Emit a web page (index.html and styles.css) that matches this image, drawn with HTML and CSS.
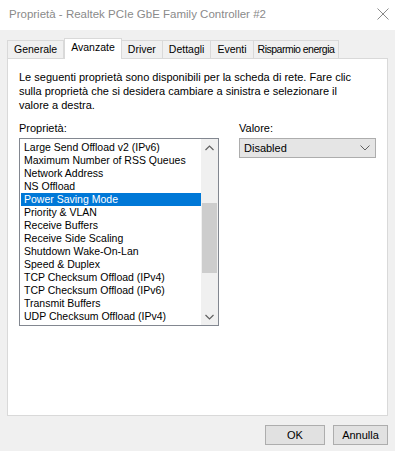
FILE: index.html
```html
<!DOCTYPE html>
<html lang="it">
<head>
  <meta charset="UTF-8">
  <title>Proprietà - Realtek PCIe GbE Family Controller #2</title>
  <link rel="stylesheet" href="styles.css">
</head>
<body>

<div class="window">
  <div class="titlebar">
    <span class="title">Proprietà - Realtek PCIe GbE Family Controller #2</span>
    <svg class="close" width="12" height="12" viewBox="0 0 12 12">
      <path d="M0.5 0.5 L11.5 11.5 M11.5 0.5 L0.5 11.5" stroke="#8a8a8a" stroke-width="1" fill="none"/>
    </svg>
  </div>

  <div class="content">
    <div class="tabs">
      <div class="tab">Generale</div>
      <div class="tab active">Avanzate</div>
      <div class="tab">Driver</div>
      <div class="tab">Dettagli</div>
      <div class="tab">Eventi</div>
      <div class="tab tab-long">Risparmio energia</div>
    </div>

    <div class="panel">
      <p class="desc">Le seguenti proprietà sono disponibili per la scheda di rete. Fare clic sulla proprietà che si desidera cambiare a sinistra e selezionare il valore a destra.</p>

      <div class="fields">
        <div class="col-left">
          <div class="label">Proprietà:</div>
          <div class="listbox">
            <ul class="items">
              <li>Large Send Offload v2 (IPv6)</li>
              <li>Maximum Number of RSS Queues</li>
              <li>Network Address</li>
              <li>NS Offload</li>
              <li class="selected">Power Saving Mode</li>
              <li>Priority &amp; VLAN</li>
              <li>Receive Buffers</li>
              <li>Receive Side Scaling</li>
              <li>Shutdown Wake-On-Lan</li>
              <li>Speed &amp; Duplex</li>
              <li>TCP Checksum Offload (IPv4)</li>
              <li>TCP Checksum Offload (IPv6)</li>
              <li>Transmit Buffers</li>
              <li>UDP Checksum Offload (IPv4)</li>
            </ul>
            <div class="scrollbar">
              <div class="arrow">
                <svg width="9" height="6" viewBox="0 0 9 6"><polyline points="0.5,5 4.5,1 8.5,5" stroke="#606060" stroke-width="1.2" fill="none"/></svg>
              </div>
              <div class="track">
                <div class="thumb"></div>
              </div>
              <div class="arrow">
                <svg width="9" height="6" viewBox="0 0 9 6"><polyline points="0.5,1 4.5,5 8.5,1" stroke="#606060" stroke-width="1.2" fill="none"/></svg>
              </div>
            </div>
          </div>
        </div>

        <div class="col-right">
          <div class="label">Valore:</div>
          <div class="select">
            <span>Disabled</span>
            <svg width="10" height="6" viewBox="0 0 10 6"><polyline points="0.5,0.5 5,5 9.5,0.5" stroke="#606060" stroke-width="1" fill="none"/></svg>
          </div>
        </div>
      </div>
    </div>

    <div class="buttons">
      <button class="btn ok">OK</button>
      <button class="btn">Annulla</button>
    </div>
  </div>
</div>

</body>
</html>
```

FILE: styles.css
```css
* {
  box-sizing: border-box;
}

body {
  margin: 0;
  background: #f0f0f0;
  font-family: "Liberation Sans", Arial, sans-serif;
  font-size: 10.5px;
  color: #000;
}

.window {
  width: 395px;
  height: 451px;
  overflow: hidden;
}

.titlebar {
  height: 30px;
  background: #fff;
  display: flex;
  align-items: center;
  justify-content: space-between;
  padding: 0 6px 2px 9px;
}

.title {
  color: #8a8a8a;
  font-size: 11.5px;
}

.content {
  padding: 7px 7px 0 7px;
}

.tabs {
  display: flex;
  align-items: flex-end;
  height: 21px;
  font-size: 10.5px;
}

.tab {
  height: 18px;
  line-height: 16px;
  padding: 0 6px;
  border: 1px solid #d9d9d9;
  border-bottom: none;
  border-left: none;
  background: #f0f0f0;
}

.tab:first-child {
  border-left: 1px solid #d9d9d9;
}

.tab-long {
  padding: 0 4px;
  letter-spacing: -0.5px;
}

.tab.active {
  height: 21px;
  line-height: 17px;
  background: #fff;
  border-left: 1px solid #d9d9d9;
  margin-bottom: -1px;
  position: relative;
  z-index: 1;
}

.panel {
  background: #fff;
  border: 1px solid #d9d9d9;
  height: 358px;
  padding: 11px 11px 0 11px;
}

.desc {
  margin: 0;
  width: 342px;
  font-size: 11px;
  line-height: 14px;
}

.fields {
  display: flex;
  gap: 20px;
  margin-top: 9px;
}

.col-left {
  width: 200px;
}

.col-right {
  flex: 1;
}

.label {
  font-size: 11px;
  line-height: 14px;
  margin-bottom: 3px;
}

.listbox {
  height: 188px;
  border: 1px solid #828790;
  display: flex;
  background: #fff;
}

.items {
  list-style: none;
  margin: 0;
  padding: 2px 0 0 1px;
  flex: 1;
}

.items li {
  height: 13px;
  line-height: 13px;
  padding-left: 3px;
  white-space: nowrap;
}

.items li.selected {
  background: #0078d7;
  color: #fff;
}

.scrollbar {
  width: 17px;
  background: #f0f0f0;
  display: flex;
  flex-direction: column;
}

.arrow {
  height: 17px;
  display: flex;
  align-items: center;
  justify-content: center;
}

.track {
  flex: 1;
  padding-top: 47px;
}

.thumb {
  height: 70px;
  margin: 0 1px;
  background: #cdcdcd;
}

.select {
  height: 20px;
  border: 1px solid #adadad;
  background: #e5e5e5;
  font-size: 11px;
  display: flex;
  align-items: center;
  justify-content: space-between;
  padding: 0 5px 0 4px;
}

.buttons {
  display: flex;
  justify-content: flex-end;
  gap: 8px;
  margin-top: 9px;
}

.btn {
  width: 55px;
  height: 20px;
  font-family: "Liberation Sans", Arial, sans-serif;
  font-size: 11px;
  background: #e1e1e1;
  border: 1px solid #adadad;
  padding: 0;
  color: #000;
}

.btn.ok {
  width: 60px;
}
```
